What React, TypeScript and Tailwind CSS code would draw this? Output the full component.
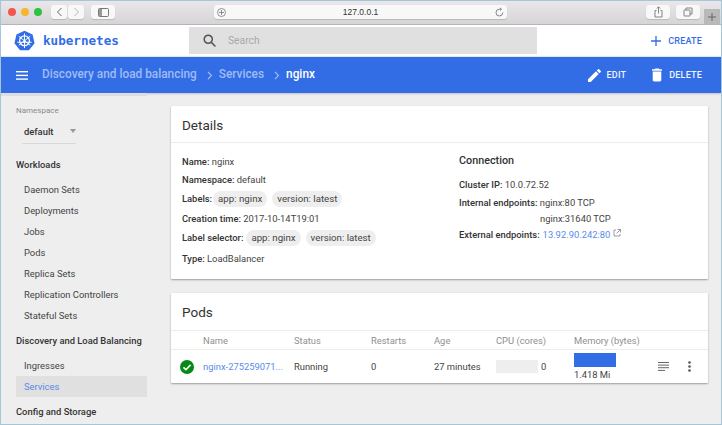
import React from "react";

const Chip = ({ children, cls }: { children: React.ReactNode; cls: string }) => (
  <span className={"inline-flex h-[16px] items-center rounded-[8px] bg-[#eeeeee] px-[5px] text-[9.7px] text-[#444] " + cls}>{children}</span>
);

const B = ({ children }: { children: React.ReactNode }) => <span className="font-medium text-[#333]">{children}</span>;

const NavItem = ({ children, active }: { children: React.ReactNode; active?: boolean }) => (
  <div className={active ? "flex h-[21px] items-center bg-[#e0e0e0] pl-[8px] text-[#5a8ae8]" : "flex h-[21px] items-center pl-[8px] text-[#444]"}>{children}</div>
);

const NavHead = ({ children, cls }: { children: React.ReactNode; cls: string }) => (
  <div className={"flex h-[20px] items-center whitespace-nowrap font-medium text-[#333] " + cls}>{children}</div>
);

const Logo = () => (
  <svg width="21" height="21" viewBox="0 0 24 24" className="shrink-0">
    <path d="M12 0.8 L21.2 5.2 L23.5 15.2 L17.1 23.2 L6.9 23.2 L0.5 15.2 L2.8 5.2 Z" fill="#326de6" />
    <circle cx="12" cy="12.3" r="5.6" fill="none" stroke="#fff" strokeWidth="1.4" />
    <g stroke="#fff" strokeWidth="1.1" strokeLinecap="round">
      <path d="M12 4.4V20.2" />
      <path d="M5.8 7.4L18.2 17.2" />
      <path d="M18.2 7.4L5.8 17.2" />
      <path d="M4.3 14L19.7 14" />
    </g>
    <circle cx="12" cy="12.3" r="1.3" fill="#fff" />
  </svg>
);

const ChromeBtn = ({ cls, children }: { cls: string; children: React.ReactNode }) => (
  <div className={"flex h-[14px] items-center rounded-[3px] bg-[#f8f8f8] shadow-[0_1px_1px_rgba(0,0,0,0.15)] " + cls}>{children}</div>
);

export default function App() {
  return (
    <div className="box-border flex h-[425px] w-[722px] flex-col overflow-hidden border border-[#a5c6d6] bg-[#eeeeee] font-['Roboto',sans-serif] text-[9.4px] leading-none text-[#444]">
      {/* browser chrome */}
      <div className="flex h-[24px] shrink-0 border-b border-[#b5b5b5] bg-gradient-to-b from-[#e9e7e9] to-[#d6d4d6]">
        <div className="flex items-center pb-[1px] pl-[7px]">
          <span className="h-[8px] w-[8px] rounded-full bg-[#f2564f]" />
          <span className="ml-[5px] h-[8px] w-[8px] rounded-full bg-[#f5b52e]" />
          <span className="ml-[5px] h-[8px] w-[8px] rounded-full bg-[#2ec23f]" />
          <div className="ml-[9px] flex">
            <ChromeBtn cls="w-[16px] justify-center">
              <svg width="7" height="10" viewBox="0 0 7 10" fill="none" stroke="#666" strokeWidth="1"><path d="M5.5 1L1.5 5L5.5 9" /></svg>
            </ChromeBtn>
            <ChromeBtn cls="ml-[1px] w-[16px] justify-center">
              <svg width="7" height="10" viewBox="0 0 7 10" fill="none" stroke="#b5b5b5" strokeWidth="1"><path d="M1.5 1L5.5 5L1.5 9" /></svg>
            </ChromeBtn>
          </div>
          <ChromeBtn cls="ml-[7px] w-[24px] justify-center">
            <svg width="11" height="9" viewBox="0 0 11 9" fill="none" stroke="#777" strokeWidth="1"><rect x="0.5" y="0.5" width="10" height="8" rx="1" /><rect x="1" y="1" width="3" height="7" fill="#999" stroke="none" /></svg>
          </ChromeBtn>
          <ChromeBtn cls="ml-[99px] w-[293px] justify-between px-[3px]">
            <svg width="9" height="9" viewBox="0 0 9 9" fill="none" stroke="#777" strokeWidth="0.8"><circle cx="4.5" cy="4.5" r="4" /><path d="M4.5 2V7M2 4.5H7" /></svg>
            <span className="font-['Liberation_Sans',sans-serif] text-[8.5px] font-medium text-[#333]">127.0.0.1</span>
            <svg width="9" height="10" viewBox="0 0 9 10" fill="none" stroke="#777" strokeWidth="0.9"><path d="M7.8 5.5A3.4 3.4 0 1 1 4.5 2.2H6" /><path d="M5 0.8L6.5 2.2L5 3.6" /></svg>
          </ChromeBtn>
          <ChromeBtn cls="ml-[139px] w-[24px] justify-center">
            <svg width="9" height="12" viewBox="0 0 9 12" fill="none" stroke="#777" strokeWidth="0.9"><path d="M2.5 4.5H1V11H8V4.5H6.5" /><path d="M4.5 7.5V1M2.8 2.5L4.5 0.8L6.2 2.5" /></svg>
          </ChromeBtn>
          <ChromeBtn cls="ml-[6px] w-[24px] justify-center">
            <svg width="10" height="10" viewBox="0 0 10 10" fill="none" stroke="#777" strokeWidth="0.9"><rect x="1" y="3" width="6" height="6" rx="0.5" /><path d="M3 3V1H9V7H7" /></svg>
          </ChromeBtn>
        </div>
        <div className="mt-auto ml-[4px] flex h-[15px] w-[16px] items-center justify-center bg-[#b9b9b9]">
          <svg width="8" height="8" viewBox="0 0 8 8" stroke="#666" strokeWidth="1"><path d="M4 0V8M0 4H8" /></svg>
        </div>
      </div>

      {/* app header */}
      <div className="flex h-[31px] shrink-0 items-center bg-white">
        <div className="ml-[13px]"><Logo /></div>
        <span className="ml-[8px] mt-[1px] w-[146px] font-['DejaVu_Sans_Mono',monospace] text-[12.6px] font-bold text-[#326de6]">kubernetes</span>
        <div className="flex h-[27px] w-[348px] items-center bg-[#e0e0e0] pl-[13px]">
          <svg width="15" height="15" viewBox="0 0 24 24" fill="none" stroke="#555" strokeWidth="2.4"><circle cx="10" cy="10" r="6.5" /><path d="M15 15L21.5 21.5" /></svg>
          <span className="ml-[11px] mt-[2px] text-[10.3px] text-[#a8a8a8]">Search</span>
        </div>
        <div className="ml-auto mt-[1px] flex items-center pr-[19px] font-medium text-[#326de6]">
          <svg width="12" height="12" viewBox="0 0 12 12" stroke="#326de6" strokeWidth="1.3"><path d="M6 1V11M1 6H11" /></svg>
          <span className="ml-[6px] text-[9px] tracking-[0.2px]">CREATE</span>
        </div>
      </div>

      {/* action bar */}
      <div className="flex h-[37px] shrink-0 items-center border-t border-[#e6e6e6] bg-[#326de6] shadow-[0_1px_2px_rgba(0,0,0,0.2)]">
        <svg width="12" height="9" viewBox="0 0 12 9" fill="#fff" className="ml-[15px]"><rect width="12" height="1.4" /><rect y="3.7" width="12" height="1.4" /><rect y="7.4" width="12" height="1.4" /></svg>
        <span className="ml-[14px] text-[11.85px] font-medium text-[#9fbcf4]">Discovery and load balancing</span>
        <svg width="6" height="9" viewBox="0 0 6 9" fill="none" stroke="#9fbcf4" strokeWidth="1.1" className="ml-[10px]"><path d="M1 1L4.5 4.5L1 8" /></svg>
        <span className="ml-[6px] text-[11.85px] font-medium text-[#9fbcf4]">Services</span>
        <svg width="6" height="9" viewBox="0 0 6 9" fill="none" stroke="#9fbcf4" strokeWidth="1.1" className="ml-[10px]"><path d="M1 1L4.5 4.5L1 8" /></svg>
        <span className="ml-[6px] text-[11.85px] font-medium text-white">nginx</span>
        <div className="ml-auto flex items-center pr-[19px] text-[9px] font-medium tracking-[0.2px] text-[#f0f4fe]">
          <svg width="13" height="13" viewBox="3 3 18 18" fill="#fff"><path d="M3 17.25V21h3.75L17.81 9.94l-3.75-3.75L3 17.25zM20.71 7.04c.39-.39.39-1.02 0-1.41l-2.34-2.34c-.39-.39-1.02-.39-1.41 0l-1.83 1.83 3.75 3.75 1.83-1.83z" /></svg>
          <span className="ml-[6px]">EDIT</span>
          <svg width="10" height="14" viewBox="5 3 14 18" fill="#fff" className="ml-[26px]"><path d="M6 19c0 1.1.9 2 2 2h8c1.1 0 2-.9 2-2V7H6v12zM19 4h-3.5l-1-1h-5l-1 1H5v2h14V4z" /></svg>
          <span className="ml-[7px]">DELETE</span>
        </div>
      </div>

      <div className="flex min-h-0 flex-1">
        {/* sidebar */}
        <div className="flex w-[146px] shrink-0 flex-col overflow-hidden pl-[15px]">
          <div className="-ml-[15px] h-[3px] bg-[#dedede]" />
          <div className="mt-[11px] text-[8px] text-[#8a8a8a]">Namespace</div>
          <div className="ml-[6px] mt-[7px] flex h-[22px] w-[54px] items-start border-b border-[#d9d9d9] pl-[2px] font-medium text-[#333]">
            <span className="mt-[5px]">default</span>
            <span className="ml-[17px] mt-[7px] h-0 w-0 border-x-[3.5px] border-t-[4px] border-x-transparent border-t-[#999]" />
          </div>
          <NavHead cls="mt-[11px] mb-[4px]">Workloads</NavHead>
          <div className="flex flex-col">
            {["Daemon Sets", "Deployments", "Jobs", "Pods", "Replica Sets", "Replication Controllers", "Stateful Sets"].map((t) => (
              <NavItem key={t}>{t}</NavItem>
            ))}
          </div>
          <NavHead cls="mt-[5px] mb-[4px]">Discovery and Load Balancing</NavHead>
          <NavItem>Ingresses</NavItem>
          <NavItem active>Services</NavItem>
          <NavHead cls="mt-[5px]">Config and Storage</NavHead>
        </div>

        {/* main */}
        <div className="flex min-w-0 flex-1 flex-col pl-[24px] pr-[13px] pt-[13px]">
          <div className="h-[173px] rounded-[1px] bg-white shadow-[0_1px_2px_rgba(0,0,0,0.35)]">
            <div className="flex h-[37px] items-center border-b border-[#ececec] pl-[11px] pt-[4px] text-[13.5px] text-[#333]">Details</div>
            <div className="flex">
              <div className="flex w-[277px] flex-col pl-[11px] pt-[9px]">
                <div className="flex h-[19px] items-center"><B>Name:</B>&nbsp;nginx</div>
                <div className="flex h-[18px] items-center"><B>Namespace:</B>&nbsp;default</div>
                <div className="flex h-[20px] items-center"><B>Labels:</B><Chip cls="ml-[1px]">app: nginx</Chip><Chip cls="ml-[5px]">version: latest</Chip></div>
                <div className="flex h-[19px] items-center"><B>Creation time:</B>&nbsp;2017-10-14T19:01</div>
                <div className="flex h-[20px] items-center"><B>Label selector:</B><Chip cls="ml-[3px]">app: nginx</Chip><Chip cls="ml-[5px]">version: latest</Chip></div>
                <div className="flex h-[21px] items-center pt-[1px]"><B>Type:</B>&nbsp;LoadBalancer</div>
              </div>
              <div className="flex flex-col pl-[11px] pt-[10px]">
                <div className="flex h-[17px] items-center text-[10.8px] font-medium text-[#333]">Connection</div>
                <div className="mt-[6px] flex h-[18px] items-center"><B>Cluster IP:</B>&nbsp;10.0.72.52</div>
                <div className="flex h-[18px] items-center"><B>Internal endpoints:</B>&nbsp;nginx:80 TCP</div>
                <div className="flex h-[13px] items-center pl-[81px]">nginx:31640 TCP</div>
                <div className="flex h-[19px] items-center">
                  <B>External endpoints:</B>
                  <span className="ml-[3px] mt-[1px] text-[#5a8ae8]">13.92.90.242:80</span>
                  <svg width="8" height="8" viewBox="0 0 8 8" fill="none" stroke="#777" strokeWidth="0.7" className="ml-[3px] -mt-[3px]"><path d="M3 1H1V7H7V5" /><path d="M4.5 .5H7.5V3.5M7.5 .5L3.5 4.5" /></svg>
                </div>
              </div>
            </div>
          </div>

          <div className="mt-[14px] h-[90px] rounded-[1px] bg-white shadow-[0_1px_2px_rgba(0,0,0,0.35)]">
            <div className="flex h-[38px] items-center border-b border-[#ececec] pl-[11px] pt-[3px] text-[13.5px] text-[#333]">Pods</div>
            <div className="grid h-[19px] grid-cols-[32px_91px_77px_63px_62px_78px_1fr] items-center border-b border-[#ececec] pt-[1px] text-[#8f8f8f]">
              <span />
              <span>Name</span>
              <span>Status</span>
              <span>Restarts</span>
              <span>Age</span>
              <span>CPU (cores)</span>
              <span>Memory (bytes)</span>
            </div>
            <div className="grid h-[33px] grid-cols-[32px_91px_77px_63px_62px_78px_1fr] items-center text-[#444]">
              <span className="flex justify-center">
                <svg width="14" height="14" viewBox="0 0 13 13"><circle cx="6.5" cy="6.5" r="6.5" fill="#058a17" /><path d="M3.2 6.8L5.5 9L9.8 4.5" fill="none" stroke="#fff" strokeWidth="1.5" /></svg>
              </span>
              <span className="text-[#5a8ae8]">nginx-275259071...</span>
              <span>Running</span>
              <span>0</span>
              <span>27 minutes</span>
              <span className="flex items-center">
                <span className="h-[13px] w-[42px] bg-[#eeeeee]" />
                <span className="ml-[3px]">0</span>
              </span>
              <span className="flex items-center">
                <span className="flex w-[42px] flex-col">
                  <span className="h-[14px] w-[42px] bg-[#326de6]" />
                  <span className="mt-[3px] whitespace-nowrap">1.418 Mi</span>
                </span>
                <svg width="11" height="9" viewBox="0 0 11 9" fill="#666" className="ml-[42px] shrink-0"><rect width="11" height="1" /><rect y="2.6" width="11" height="1" /><rect y="5.2" width="11" height="1" /><rect y="7.9" width="7" height="1" /></svg>
                <svg width="3" height="11" viewBox="0 0 3 11" fill="#555" className="ml-[19px] shrink-0"><circle cx="1.5" cy="1.5" r="1.3" /><circle cx="1.5" cy="5.5" r="1.3" /><circle cx="1.5" cy="9.5" r="1.3" /></svg>
              </span>
            </div>
          </div>
        </div>
      </div>
    </div>
  );
}
